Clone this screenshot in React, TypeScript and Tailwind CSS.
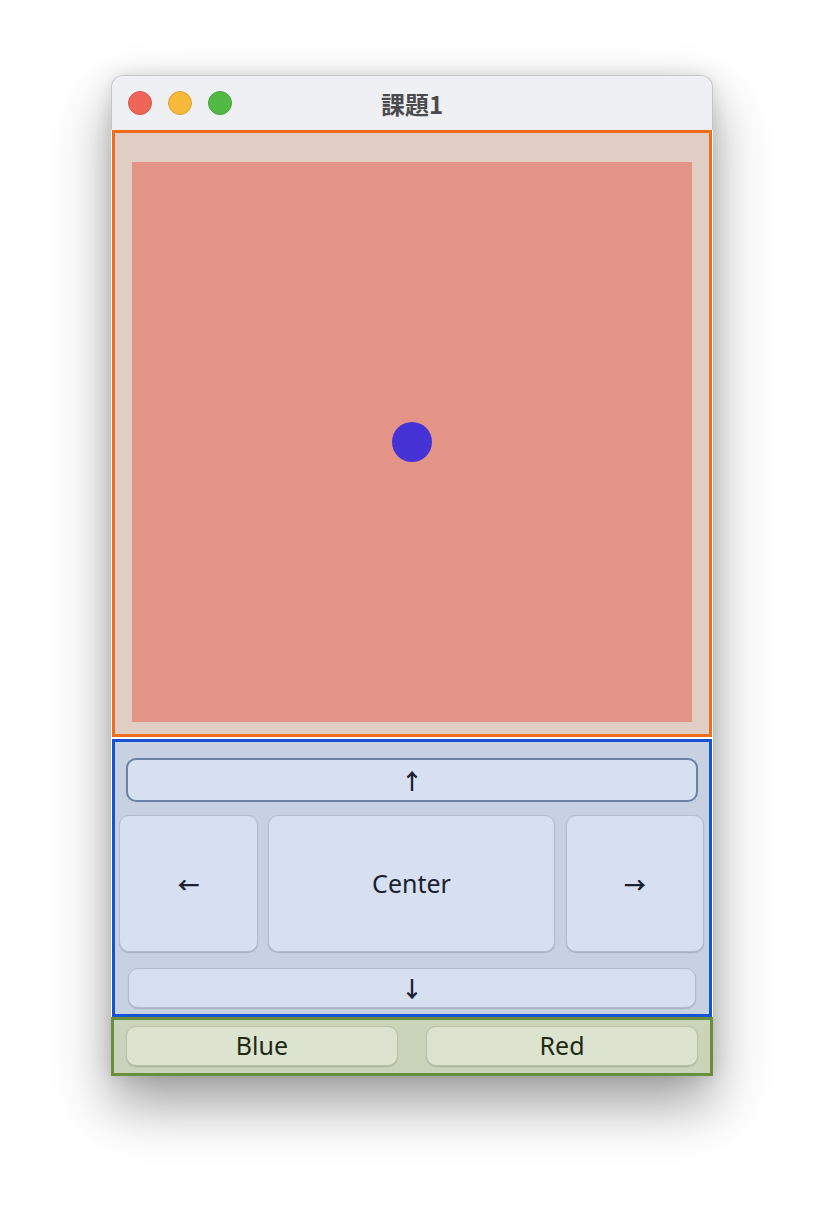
import React from "react";

const btnBlue =
  "flex items-center justify-center bg-[#d7e0f1] border border-[#b3bccf] rounded-[10px] shadow-[0_1px_1px_rgba(60,70,100,0.25)] text-[#1b2130] text-[25px]";
const btnGreen =
  "flex items-center justify-center bg-[#dce4cf] border border-[#b9c2aa] rounded-[10px] shadow-[0_1px_1px_rgba(60,80,40,0.25)] text-[#1f2a14] text-[25px]";
const arrow = "font-bold text-[22px] leading-none";

export default function App() {
  return (
    <div
      className="min-h-screen w-full bg-white pt-[75px]"
      style={{ fontFamily: '"Noto Sans", "Noto Sans CJK JP", sans-serif' }}
    >
      <div className="mx-auto w-[602px] rounded-t-[12px] shadow-[0_28px_55px_rgba(0,0,0,0.38),0_0_18px_rgba(0,0,0,0.12)]">
        {/* title bar */}
        <div className="relative h-[55px] rounded-t-[12px] border-x border-t border-[#c6c6c8] bg-[#eff0f4] flex items-center">
          <div className="flex items-center gap-[16px] pl-[16px]">
            <div className="w-[24px] h-[24px] rounded-full bg-[#ef6658] border border-[#d6544a]" />
            <div className="w-[24px] h-[24px] rounded-full bg-[#f7b93a] border border-[#dea232]" />
            <div className="w-[24px] h-[24px] rounded-full bg-[#53b945] border border-[#45a23a]" />
          </div>
          <div
            className="absolute inset-x-0 top-0 h-[55px] flex items-center justify-center text-[24px] font-bold text-[#4b4b4d] pointer-events-none"
            style={{ fontFamily: '"Noto Sans CJK JP", "Noto Sans", sans-serif' }}
          >
            課題1
          </div>
        </div>

        {/* orange canvas panel */}
        <div className="mx-px border-[3px] border-[#ef6c1c] bg-[#e0cec5] pt-[29px] pb-[12px] px-[17px]">
          <div className="w-[560px] h-[560px] bg-[#e49486] flex items-center justify-center">
            <div className="w-[40px] h-[40px] rounded-full bg-[#4533d6]" />
          </div>
        </div>

        {/* blue control panel */}
        <div className="mx-px mt-[2px] border-[3px] border-[#1653d2] bg-[#c8d1e2] pt-[16px] pb-[6px] px-[2px]">
          <div className="mx-[9px] h-[44px] flex items-center justify-center bg-[#d7e0f1] border-2 border-[#6c81a4] rounded-[10px] text-[#1b2130]">
            <span className={arrow}>↑</span>
          </div>
          <div className="mt-[13px] h-[137px] flex pl-[2px] pr-[3px]">
            <div className={`${btnBlue} w-[140px] h-full`}>
              <span className={arrow}>←</span>
            </div>
            <div className={`${btnBlue} ml-[10px] w-[289px] h-full`}>Center</div>
            <div className={`${btnBlue} ml-[11px] w-[139px] h-full`}>
              <span className={arrow}>→</span>
            </div>
          </div>
          <div className={`${btnBlue} mt-[16px] mx-[11px] h-[40px]`}>
            <span className={arrow}>↓</span>
          </div>
        </div>

        {/* green color panel */}
        <div className="border-[3px] border-[#6a8f3a] bg-[#cad4ba] pt-[6px] pb-[7px] px-[12px] flex gap-[28px]">
          <div className={`${btnGreen} w-[272px] h-[40px]`}>Blue</div>
          <div className={`${btnGreen} w-[272px] h-[40px]`}>Red</div>
        </div>
      </div>
    </div>
  );
}
